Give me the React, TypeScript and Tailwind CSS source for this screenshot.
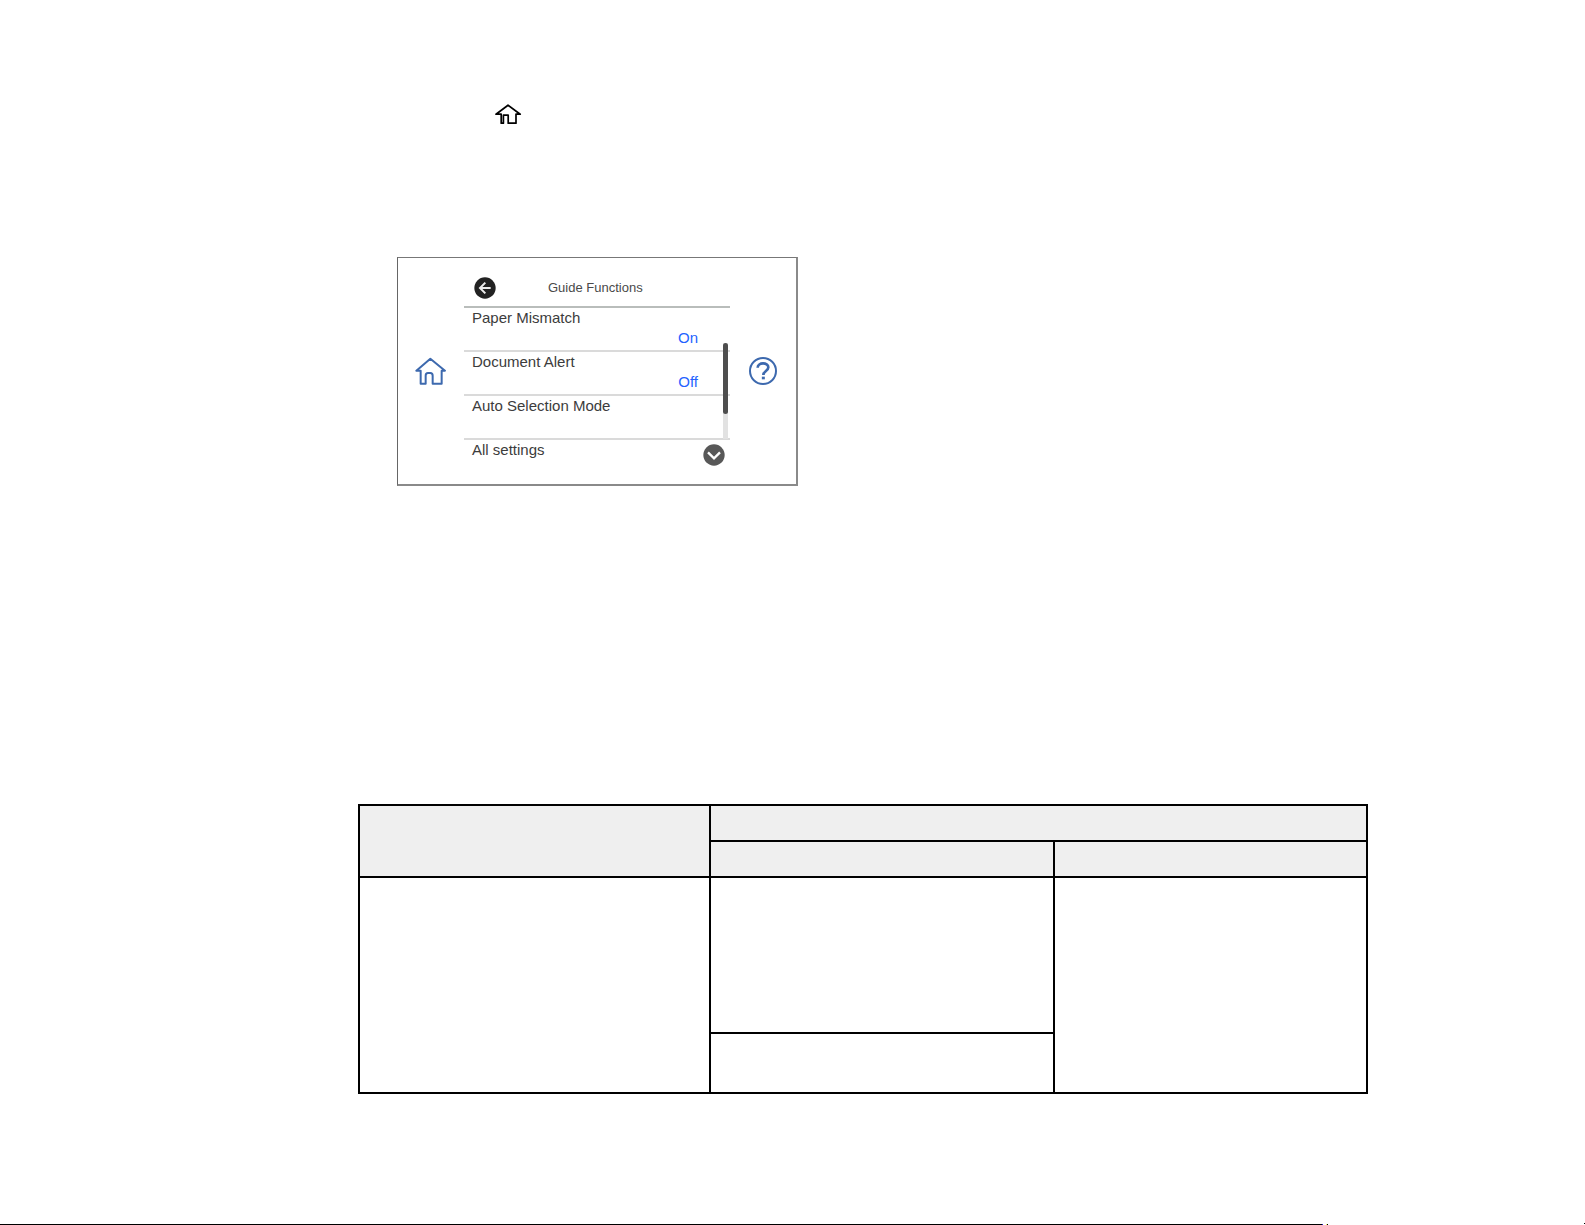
import { useState } from "react"

const settings = [
  { name: "Paper Mismatch", value: "On" },
  { name: "Document Alert", value: "Off" },
  { name: "Auto Selection Mode", value: "" },
]

function HomeIcon() {
  return (
    <svg
      className="block h-[21px] w-[27px]"
      viewBox="0 0 27 21"
      fill="none"
      stroke="#000"
      strokeWidth="1.7"
      strokeLinejoin="round"
      aria-hidden="true"
    >
      <path d="M13 1.2 25.2 10.2H21V19.2H13.2V11.2H8.4V19.2H6.2V10.2H1Z" />
    </svg>
  )
}

function PanelHomeIcon() {
  return (
    <svg
      className="block h-7 w-8"
      viewBox="0 0 96 84"
      fill="none"
      stroke="#3d69ae"
      strokeWidth="6"
      strokeLinejoin="round"
      aria-hidden="true"
    >
      <path d="M46 5 90 41H80V80H53V56Q53 48 46 48H39Q32 48 32 56V80H17V41H4Z" />
    </svg>
  )
}

function HelpIcon() {
  return (
    <svg className="block h-7 w-7" viewBox="0 0 84 84" fill="none" stroke="#3d69ae" aria-hidden="true">
      <circle cx="42" cy="42" r="39" strokeWidth="6" />
      <path d="M26 32C26 15 58 15 58 31C58 42 43 42 43 54" strokeWidth="8" />
      <path d="M43 59V67" strokeWidth="9" />
    </svg>
  )
}

function BackIcon() {
  return (
    <svg className="block h-[22px] w-[22px]" viewBox="0 0 66 66" fill="none" aria-hidden="true">
      <circle cx="33" cy="33" r="32" fill="#222" />
      <path d="M34 17 18 33 34 49M18 33H50" stroke="#eee" strokeWidth="6" />
    </svg>
  )
}

function DownIcon() {
  return (
    <svg className="block h-[22px] w-[22px]" viewBox="0 0 66 66" fill="none" aria-hidden="true">
      <circle cx="33" cy="33" r="32" fill="#585858" />
      <path d="M15 25 33 43 51 25" stroke="#fff" strokeWidth="7" />
    </svg>
  )
}

function GuidePanel() {
  const [selected, setSelected] = useState("")

  return (
    <section className="flex w-fit border-t border-r-2 border-b-2 border-l border-t-[#777] border-r-[#8a8a8a] border-b-[#8a8a8a] border-l-[#666] bg-white text-[15px] leading-5 text-[#3c3c3c]">
      <nav className="flex w-[66px] items-center justify-center">
        <button type="button" aria-label="Home">
          <PanelHomeIcon />
        </button>
      </nav>

      <div className="w-[266px]">
        <header className="flex h-[50px] items-center gap-[52px] border-b-2 border-[#b9bdbb] pt-3 pl-[10px]">
          <button type="button" aria-label="Back">
            <BackIcon />
          </button>
          <h1 className="text-[13px] text-[#4a4a4a]">Guide Functions</h1>
        </header>

        <div className="relative">
          <ul>
            {settings.map((item) => (
              <li key={item.name} className="h-11 border-b-2 border-[#dadada]">
                <button
                  type="button"
                  aria-pressed={selected === item.name}
                  onClick={() => setSelected(item.name)}
                  className="block w-full pr-8 pl-2 text-left"
                >
                  <span className="block">{item.name}</span>
                  <span className="block text-right text-[#2463ff]">{item.value}</span>
                </button>
              </li>
            ))}
            <li className="flex h-11 items-start justify-between pr-[5px] pl-2">
              <button type="button">All settings</button>
              <button type="button" aria-label="Scroll down" className="mt-1">
                <DownIcon />
              </button>
            </li>
          </ul>
          {/* scroll track */}
          <div className="absolute top-[35px] right-[2px] h-24 w-[5px] bg-[#e2e2e2]">
            <div className="h-[71px] rounded-sm bg-[#4e4e4e]" />
          </div>
        </div>
      </div>

      <aside className="flex w-[66px] items-center justify-center">
        <button type="button" aria-label="Help">
          <HelpIcon />
        </button>
      </aside>
    </section>
  )
}

function SettingsTable() {
  return (
    <table className="w-full table-fixed border-collapse border-2 border-black">
      <colgroup>
        <col className="w-[351px]" />
        <col className="w-[344px]" />
        <col />
      </colgroup>
      <thead className="bg-[#efefef]">
        <tr className="h-9">
          <th rowSpan={2} className="border-2 border-black p-0" />
          <th colSpan={2} className="border-2 border-black p-0" />
        </tr>
        <tr className="h-9">
          <th className="border-2 border-black p-0" />
          <th className="border-2 border-black p-0" />
        </tr>
      </thead>
      <tbody>
        <tr className="h-[156px]">
          <td rowSpan={2} className="border-2 border-black p-0" />
          <td className="border-2 border-black p-0" />
          <td rowSpan={2} className="border-2 border-black p-0" />
        </tr>
        <tr className="h-[60px]">
          <td className="border-2 border-black p-0" />
        </tr>
      </tbody>
    </table>
  )
}

export default function App() {
  return (
    <div className="flex min-h-screen flex-col bg-white font-['Liberation_Sans',Arial,sans-serif]">
      <main className="grow pt-[104px] pr-[217px] pl-[358px]">
        <div className="pl-[137px]">
          <HomeIcon />
        </div>
        <div className="mt-[132px] pl-[39px]">
          <GuidePanel />
        </div>
        <div className="mt-[318px]">
          <SettingsTable />
        </div>
      </main>

      {/* page rule with its end marks */}
      <footer className="flex h-[2px] items-end">
        <div className="h-px grow bg-black" />
        <div className="h-px w-px bg-[#2020c0]" />
        <div className="ml-[3px] h-px w-px bg-[#f0f060]" />
        <div className="mr-64 h-px w-px bg-black" />
        <div className="h-px w-px self-start bg-black" />
      </footer>
    </div>
  )
}
